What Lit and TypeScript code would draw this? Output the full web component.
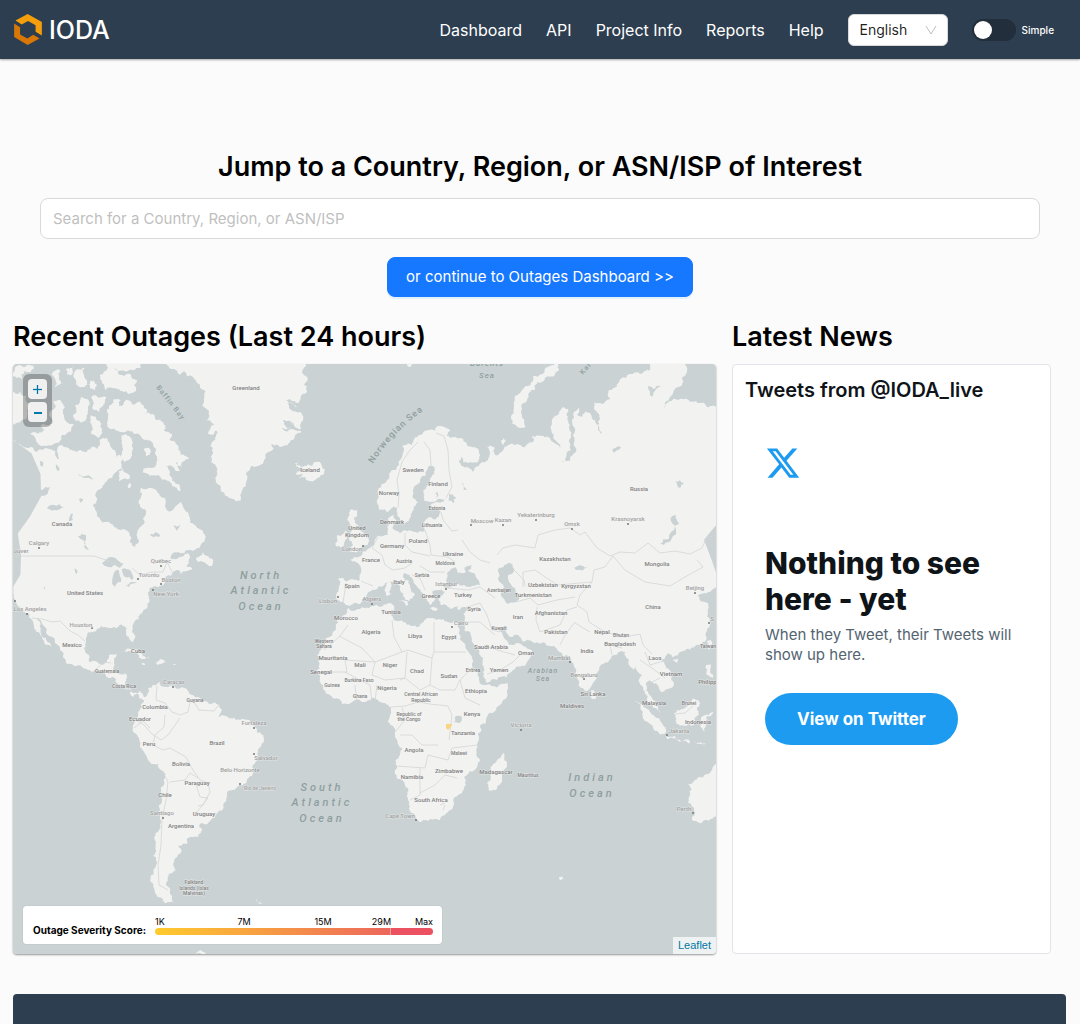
import { LitElement, html, css, svg } from "lit";
import { customElement, state } from "lit/decorators.js";

type Label = [x: number, y: number, text: string, size?: number];

/* Coastlines, as "x,y x,y ..." rings in map units. */
const LAND: string[] = [
  // Greenland
  "166,360 172,369 180,375 184,371 193,377 200,385 204,400 205,408 209,412 206,420 214,424 208,434 217,431 215,440 210,446 213,452 211,462 216,466 215,478 222,492 230,498 236,502 240,501 242,490 247,480 247,472 258,466 265,459 268,452 274,449 271,444 280,447 290,441 300,433 301,431 288,431 282,428 291,428 283,420 293,425 290,418 301,429 302,415 296,412 286,404 298,408 286,400 299,403 301,396 307,391 304,384 308,380 302,372 306,366 300,360",
  // Iceland
  "295,463 299,463 296,466 303,467 308,464 312,466 315,462 320,462 325,470 320,477 309,481 299,478 303,474 296,474 302,470",
  // Mainland of the Americas
  "13,440 20,444 30,447 36,452 50,449 57,452 62,445 70,450 80,450 86,452 93,446 97,449 100,440 107,438 110,444 113,450 116,458 120,455 121,462 118,470 112,478 105,483 96,493 93,505 98,517 110,523 120,530 129,532 130,542 135,547 139,541 138,530 144,524 146,514 140,507 139,500 142,495 141,488 150,488 157,492 165,498 166,508 172,511 176,506 180,501 185,510 189,514 190,523 197,528 203,532 205,540 200,547 190,550 178,552 170,558 180,557 188,553 189,559 186,566 192,569 181,574 178,570 172,575 167,576 160,586 153,587 148,595 147,608 140,614 134,622 132,630 135,638 134,643 130,640 127,628 120,625 112,628 105,627 97,629 88,632 86,640 85,652 90,662 100,664 107,662 109,655 117,654 114,662 113,669 125,673 127,678 125,688 133,693 140,691 144,697 148,688 153,685 160,682 161,686 165,687 175,687 187,689 193,695 205,701 215,702 222,710 219,717 228,717 240,720 255,727 263,735 264,742 258,752 253,765 252,776 246,783 238,786 227,793 224,803 217,813 210,821 200,824 202,830 198,837 188,838 187,844 178,846 181,853 174,860 176,870 168,880 166,885 170,892 175,904 165,903 155,893 150,880 155,868 153,856 156,842 160,825 162,800 164,785 163,771 150,762 147,757 140,745 134,733 133,728 135,720 140,710 144,700 138,694 133,697 123,686 115,678 105,674 95,671 88,670 72,664 63,657 60,648 52,637 43,625 37,618 40,627 46,638 52,648 46,645 40,634 32,620 28,613 20,608 15,600 10,592",
  "13,392 20,392 26,396 30,405 27,416 20,422 13,424",
  "13,376 15,368 22,366 34,365 31,372 25,371 22,379",
  "30,434 45,430 40,425 52,424 50,412 56,406 53,402 60,400 65,407 65,420 74,424 71,432 62,435 60,441 48,445 40,445 36,440",
  "73,415 75,405 80,402 82,397 89,401 87,415 81,423",
  "92,396 106,397 103,406 99,412 92,408",
  "91,415 97,420 102,430 99,438 91,434",
  "76,370 85,368 84,377 87,385 78,386",
  "52,375 60,370 59,378 64,384 55,387",
  "66,369 73,367 73,373 67,375",
  "90,381 94,380 97,386 95,390 90,388",
  "100,375 108,368 118,373 130,374 137,380 136,391 122,391 115,388 105,390 102,383",
  "104,360 142,360 140,368 132,370 118,371 109,370",
  // Baffin
  "110,405 114,399 121,400 119,406 126,400 133,405 140,402 147,410 145,415 153,414 160,420 165,425 164,431 172,434 170,440 176,444 181,455 189,459 182,467 176,462 180,472 172,466 165,466 170,472 180,485 180,492 172,486 163,480 158,475 150,476 142,473 143,469 152,468 157,458 155,448 145,440 135,434 128,430 118,431 109,428 108,418",
  "121,436 130,437 132,452 125,462 117,458 123,449",
  "119,471 123,468 130,476 128,480 119,481",
  "144,449 149,448 150,453 146,456",
  "127,486 131,484 130,488",
  "196,560 203,552 207,556 213,560 211,566 204,562",
  // Caribbean
  "123,652 130,649 138,650 150,658 144,659 137,653",
  "155,663 160,659 167,663 158,665",
  "172,664 176,664 175,665",
  "141,664 146,664 144,665",
  // Eurasia
  "338,579 342,578 355,580 360,580 361,572 358,563 350,560 356,557 361,556 363,552 368,549 374,545 378,536 388,535 387,527 388,518 395,514 397,522 393,529 400,533 408,531 416,532 425,531 424,522 430,517 435,520 441,512 436,507 428,508 434,503 446,499 438,499 430,502 424,500 423,490 430,480 435,470 432,466 428,467 426,475 418,484 413,495 418,502 412,512 409,521 404,524 400,518 397,508 393,507 387,512 380,510 377,500 378,490 387,480 395,470 400,460 404,450 402,446 408,443 412,445 418,436 423,434 430,430 435,431 440,426 446,428 450,431 446,436 455,437 465,442 475,447 480,455 478,462 468,463 463,462 461,457 459,461 468,467 473,472 479,466 481,463 488,460 487,447 494,447 495,455 503,450 515,445 525,447 533,442 532,436 540,436 550,438 560,448 554,435 558,415 561,409 568,409 570,425 569,440 571,450 565,459 561,462 570,461 576,448 573,435 574,418 579,408 577,415 587,424 582,414 590,413 598,425 600,434 602,432 600,418 594,408 594,402 610,399 609,390 620,379 630,374 640,374 650,370 652,360 683,360 687,372 682,385 670,397 664,408 678,400 690,402 700,403 707,407 720,407 720,585 708,592 698,595 700,600 705,602 708,610 710,622 706,632 700,645 690,650 678,655 672,657 668,653 662,660 665,665 672,675 674,685 668,689 663,692 658,685 650,680 646,683 646,690 652,698 658,707 660,713 653,708 647,700 643,690 642,675 636,666 633,671 629,660 625,652 618,652 612,656 605,663 595,674 592,685 587,691 581,688 575,675 571,660 570,656 563,657 556,648 545,643 535,643 525,641 520,637 510,637 502,627 499,630 506,640 509,645 518,643 523,646 532,652 527,662 513,670 497,680 487,683 484,668 480,655 473,643 464,630 465,622 467,607 460,607 450,609 441,605 439,596 445,592 438,590 432,591 435,600 430,605 425,598 418,588 412,578 405,573 403,577 410,588 415,595 409,601 405,598 400,590 393,582 385,583 378,587 372,590 366,597 360,604 350,606 344,603 338,600 339,588",
  // Africa
  "348,608 358,609 372,606 388,603 393,605 391,615 394,620 402,620 412,626 420,625 428,618 436,620 450,623 458,623 460,630 460,635 467,650 473,662 478,673 486,685 508,683 507,692 500,705 487,717 480,727 478,735 477,745 480,760 477,767 464,777 464,789 455,797 450,810 440,820 428,821 420,822 415,815 408,800 405,785 397,768 400,755 402,748 395,735 388,722 391,707 385,703 378,700 365,702 342,704 330,695 320,682 316,672 317,655 325,640 336,628 336,618",
  "503,753 507,762 502,778 496,790 490,791 487,783 490,770 497,760",
  "350,510 357,510 354,518 358,525 362,532 368,538 367,545 360,549 350,551 353,545 349,540 352,530 347,520",
  "337,535 345,530 347,538 344,545 336,546",
  "386,584 390,582 391,594 387,596",
  "398,600 408,601 406,606",
  "430,608 438,609 432,610",
  "457,608 463,606 459,610",
  // Arctic islands of Eurasia
  "556,360 559,370 545,378 535,390 527,400 522,415 525,428 517,427 511,418 514,405 522,390 533,376 548,367",
  "501,441 504,438 506,442 503,445",
  "407,364 412,364 411,367",
  // South Asia and Oceania
  "591,690 596,695 595,699 591,698",
  "634,701 642,704 650,712 658,718 664,726 664,734 658,732 650,724 643,712",
  "666,736 675,736 690,741 690,743 678,741 667,739",
  "674,713 678,710 685,708 693,698 700,703 697,708 699,715 694,725 685,726 676,723",
  "703,716 714,712 706,717 711,725 706,722 704,732",
  "706,665 711,664 710,672 714,678 707,675",
  "707,642 711,640 709,650",
  "673,660 678,658 677,663",
  "694,741 700,742 706,743 700,744",
  "720,762 710,773 695,780 688,784 690,795 688,803 695,812 692,820 700,823 705,820 720,818",
  "559,877 564,878 560,880",
  "256,899 262,903 260,904",
  "195,954 200,950 206,952 205,954",
];

const LAKES: string[] = [
  "443,586 447,578 450,571 455,567 458,573 466,572 464,568 472,565 468,571 478,580 480,585 470,587 458,584 448,588",
  "499,568 504,565 513,565 514,570 508,575 509,582 515,588 516,602 508,604 503,598 504,588 498,578",
  "102,563 112,557 124,564 120,568 108,567",
  "114,573 119,570 121,582 115,587",
  "122,569 131,571 132,580 125,577",
  "126,586 137,582 129,587",
  "455,717 461,716 459,723 454,723",
  "13,462 28,460 26,468 14,470",
  "34,494 42,490 50,487 46,495 38,497",
  "47,509 54,505 64,507 54,510",
  "78,536 86,535 89,550 84,547",
  "449,494 456,497 454,503 449,501",
  "462,482 467,490 463,491",
  "660,544 669,539 675,526 671,540 664,545",
  "648,386 655,389 663,386 654,392 652,397",
  "574,568 582,566 588,567 576,570",
  "675,481 684,483 680,488",
  "612,450 621,447 613,453",
  "40,461 43,462 42,467 40,465",
  "15,490 20,492 16,493",
  "55,463 58,466 59,471 56,467",
  "78,474 86,476 94,479 84,478",
  "71,514 74,512 73,520 69,521",
  "80,498 83,499 81,503",
  "54,450 57,449 59,459 56,457",
  "150,534 156,532 160,536 153,537",
  "173,526 180,524 176,531",
  "418,507 421,505 420,512",
  "435,493 438,492 437,498",
  "672,516 676,515 679,523 675,526",
  "42,586 45,587 44,590",
  "74,569 78,571 77,575",
];

const BORDERS: string[] = [
  "13,556 94,556 106,560 122,566 M13,556 V600",
  "32,618 42,619 52,622 60,621 70,631 78,635 85,641",
  "132,568 140,575 152,572 163,572 167,562 172,572",
  "94,671 104,662 111,663 M108,674 116,671 122,674 M127,687 132,692",
  "157,686 156,700 165,703 172,712 180,715 188,712 190,702 M193,700 199,710 214,711 220,703 M135,720 143,724 152,734 161,740 168,735 180,718",
  "134,728 143,721 150,728 M165,715 164,727 155,735 153,745 163,750 170,748 186,757 193,770 200,780 208,783 210,792 203,805 198,806",
  "163,772 168,782 166,800 162,820 161,845 158,865 159,885 168,890 M170,782 185,780 190,773 198,778 M196,784 200,797 208,798 197,812",
  "398,508 399,495 397,480 402,462 410,450 418,442 M424,442 430,450 431,465 M436,433 444,436 448,450 449,470 452,487 446,498",
  "441,512 443,520 452,531 458,530 M425,530 430,545 431,555 448,557 455,562 M405,533 405,545 412,552 430,556 M378,537 372,548 382,555 385,565",
  "346,583 343,603 M361,581 373,586 M385,565 393,570 405,568 412,563 M412,575 420,578 425,590 M420,566 430,572 445,572",
  "497,555 503,548 515,545 535,548 538,535 555,530 570,528 580,535 585,532 597,548 610,556 620,552 635,553 648,543 660,553 675,551 690,554 702,548 707,537 715,536",
  "514,570 524,580 525,586 M523,587 523,572 535,570 545,577 558,585 580,583 592,582 594,570 605,567 613,556",
  "613,556 625,570 645,582 670,586 685,577 703,567 697,560 M592,582 580,595 577,605 587,612 589,622 605,632 625,637 640,634 643,645 652,654",
  "516,602 530,598 538,605 557,600 575,597 M537,607 536,620 540,632 560,625 567,610 577,607 M575,622 565,635 560,645",
  "448,588 468,590 480,587 495,598 M467,607 480,603 487,615 492,630 500,632 M465,622 480,622 495,635",
  "487,674 500,670 513,662 520,655 M484,645 497,650 515,655",
  "348,625 340,636 324,650 M339,636 362,648 375,662 M392,620 394,637 402,652 375,662 345,660 347,672 318,672",
  "434,622 434,652 432,658 408,650 402,652 M434,652 466,652 M432,658 430,685 420,690 405,678 400,680",
  "375,662 372,675 385,680 405,678 407,652 M345,672 360,680 370,685 372,702 M377,685 375,701 M355,685 357,703",
  "430,685 440,690 455,690 460,680 472,668 M460,680 465,698 480,705 M391,707 405,706 418,702 430,704 448,706 452,715 449,740",
  "402,707 405,720 395,732 M400,735 412,735 422,745 438,745 M397,766 425,768 428,755 448,760 452,748 478,745",
  "420,768 420,795 410,800 M420,793 435,785 445,775 457,778 M445,805 443,810 M440,805 445,803",
  "640,660 652,668 665,678 M652,682 660,678 M645,652 650,665 660,662 671,660 M675,714 685,713 693,706",
  "612,655 610,645 622,648 M575,623 590,632 M462,540 470,552 480,560 490,563",
];

const COUNTRIES: Label[] = [
  [246, 390, "Greenland"], [310, 472, "Iceland"], [62, 526, "Canada"], [85, 595, "United States"],
  [72, 647, "Mexico"], [138, 653, "Cuba"], [107, 673, "Guatemala", 5], [124, 688, "Costa Rica", 5],
  [155, 709, "Colombia"], [140, 721, "Ecuador"], [149, 746, "Peru"], [217, 745, "Brazil"],
  [195, 702, "Guyana", 5], [181, 766, "Bolivia"], [197, 785, "Paraguay"], [165, 797, "Chile"],
  [204, 816, "Uruguay"], [181, 828, "Argentina"], [194, 884, "Falkland", 5], [194, 890, "Islands (Islas", 5],
  [194, 895, "Malvinas)", 5], [413, 472, "Sweden"], [438, 486, "Finland"], [389, 495, "Norway"],
  [437, 510, "Estonia", 5], [392, 524, "Denmark"], [432, 527, "Lithuania", 5], [357, 530, "United"],
  [357, 537, "Kingdom"], [392, 548, "Germany"], [418, 543, "Poland"], [453, 556, "Ukraine"],
  [371, 562, "France"], [404, 563, "Austria", 5], [445, 565, "Moldova", 5], [422, 577, "Serbia", 5],
  [352, 588, "Spain"], [399, 584, "Italy"], [431, 598, "Greece"], [463, 597, "Turkey"],
  [391, 614, "Tunisia"], [346, 620, "Morocco"], [371, 634, "Algeria"], [415, 638, "Libya"],
  [449, 639, "Egypt"], [324, 643, "Western", 5], [324, 648, "Sahara", 5], [333, 660, "Mauritania"],
  [360, 667, "Mali"], [390, 667, "Niger"], [417, 673, "Chad"], [449, 678, "Sudan"],
  [321, 674, "Senegal"], [359, 682, "Burkina Faso", 5], [332, 687, "Guinea", 5], [387, 690, "Nigeria"],
  [360, 698, "Ghana", 5], [421, 696, "Central African", 5], [421, 702, "Republic", 5],
  [476, 693, "Ethiopia"], [473, 672, "Eritrea", 5], [409, 716, "Republic of", 5], [409, 721, "the Congo", 5],
  [472, 716, "Kenya"], [463, 735, "Tanzania"], [414, 752, "Angola"], [459, 755, "Malawi", 5],
  [412, 779, "Namibia"], [449, 773, "Zimbabwe"], [431, 802, "South Africa"], [496, 774, "Madagascar"],
  [528, 777, "Mauritius", 5], [639, 491, "Russia"], [555, 561, "Kazakhstan"], [657, 566, "Mongolia"],
  [543, 587, "Uzbekistan"], [576, 588, "Kyrgyzstan"], [533, 597, "Turkmenistan"], [499, 592, "Azerbaijan", 5],
  [653, 609, "China"], [551, 615, "Afghanistan"], [518, 619, "Iran"], [474, 611, "Syria"],
  [499, 630, "Kuwait", 5], [556, 634, "Pakistan"], [602, 634, "Nepal"], [621, 637, "Bhutan", 5],
  [491, 649, "Saudi Arabia"], [526, 655, "Oman"], [499, 672, "Yemen"], [587, 653, "India"],
  [620, 646, "Bangladesh"], [655, 660, "Laos"], [671, 676, "Vietnam"], [593, 696, "Sri Lanka"],
  [572, 708, "Maldives"], [654, 705, "Malaysia"], [689, 705, "Brunei", 5], [698, 724, "Indonesia"],
  [713, 684, "Philippines"], [708, 648, "Taiwan", 5],
];

const CITIES: Label[] = [
  [39, 545, "Calgary"], [21, 553, "ouver"], [161, 563, "Québec"], [149, 577, "Toronto"],
  [171, 582, "Boston"], [166, 596, "New York"], [30, 611, "Los Angeles"], [81, 627, "Houston"],
  [174, 684, "Caracas"], [254, 725, "Fortaleza"], [266, 760, "Salvador"], [240, 772, "Belo Horizonte"],
  [260, 790, "Rio de Janeiro", 5], [162, 815, "Santiago"], [400, 818, "Cape Town"], [352, 551, "London"],
  [482, 523, "Moscow"], [503, 522, "Kazan"], [536, 517, "Yekaterinburg"], [572, 526, "Omsk"],
  [628, 521, "Krasnoyarsk"], [328, 603, "Lisbon"], [372, 601, "Algiers"], [446, 586, "Istanbul"],
  [461, 625, "Cairo"], [559, 660, "Mumbai"], [584, 677, "Bengaluru"], [521, 727, "Victoria"],
  [679, 733, "Jakarta"], [695, 590, "Beijing"], [684, 811, "Perth"], [712, 621, "S"],
];

const DOTS: [number, number][] = [
  [39, 548], [161, 566], [138, 579], [161, 584], [153, 590], [15, 601], [27, 614], [92, 628], [173, 687],
  [254, 728], [254, 754], [240, 784], [163, 818], [416, 820], [363, 546], [471, 525], [503, 525], [536, 520],
  [572, 529], [628, 524], [338, 597], [372, 604], [446, 589], [452, 627], [570, 662], [584, 679],
  [521, 730], [667, 735], [695, 593], [693, 813], [709, 623],
];

const OCEANS: Label[] = [
  [261, 579, "North"], [261, 594, "Atlantic"], [261, 610, "Ocean"],
  [322, 791, "South"], [322, 806, "Atlantic"], [322, 822, "Ocean"],
  [592, 781, "Indian"], [592, 797, "Ocean"],
];

const SEAS: Label[] = [
  [487, 366, "Barents", 8], [487, 378, "Sea", 8], [543, 673, "Arabian", 7], [543, 681, "Sea", 7],
];

/* Splits every edge of a ring and nudges the new points, which gives a coast its ragged line. */
function coast(ring: string, depth = 3): string {
  let pts = ring.split(" ").map((p) => p.split(",").map(Number));
  for (let d = 0; d < depth; d++) {
    const next: number[][] = [];
    pts.forEach(([x, y], i) => {
      const [u, v] = pts[(i + 1) % pts.length];
      const noise = Math.sin(x * 12.9898 + y * 78.233 + d) * 43758.5453;
      const k = (noise - Math.floor(noise) - 0.5) * 0.5;
      next.push([x, y], [(x + u) / 2 - (v - y) * k, (y + v) / 2 + (u - x) * k]);
    });
    pts = next;
  }
  return pts.map(([x, y]) => `${x.toFixed(1)},${y.toFixed(1)}`).join(" ");
}

@customElement("world-map")
class WorldMap extends LitElement {
  static styles = css`
    :host { display: block; height: 100%; }
    svg { display: block; width: 100%; height: 100%; background: #cad2d3; }
    .land { fill: #f2f2f1; }
    .lake { fill: #cad2d3; }
    .border { fill: none; stroke: #d3d5d5; stroke-width: 0.8; stroke-linejoin: round; }
    text { font-family: Roboto, "Liberation Sans", sans-serif; text-anchor: middle; }
    .country, .city { paint-order: stroke; stroke: #f4f4f3; stroke-width: 1; stroke-opacity: 0.6; font-weight: 500; }
    .country { fill: #808080; }
    .city { fill: #a0a0a0; }
    .dot { fill: #777; }
    .ocean { fill: #8f9f9f; font-size: 11px; font-style: italic; font-weight: 500; letter-spacing: 3px; }
    .sea { fill: #8f9f9f; letter-spacing: 1px; font-weight: 500; }
    .alert { fill: #f8d57e; }
  `;

  private labels(list: Label[], cls: string) {
    return list.map(([x, y, text, size = 6]) => svg`<text class=${cls} x=${x} y=${y} font-size=${size}>${text}</text>`);
  }

  render() {
    return html`
      <svg viewBox="13 364 703 590" preserveAspectRatio="xMidYMid slice" role="img" aria-label="World map of outages">
        ${LAND.map((r) => svg`<polygon class="land" points=${coast(r)} />`)}
        ${LAKES.map((r) => svg`<polygon class="lake" points=${coast(r, 2)} />`)}
        ${BORDERS.map((b) => svg`<path class="border" d=${"M" + b} />`)}
        <polygon class="alert" points="446,724 452,724 451,727 448,730 446,728" />
        ${DOTS.map(([x, y]) => svg`<circle class="dot" cx=${x} cy=${y} r="1" />`)}
        ${this.labels(CITIES, "city")}
        ${this.labels(COUNTRIES, "country")}
        ${OCEANS.map(([x, y, t]) => svg`<text class="ocean" x=${x} y=${y}>${t}</text>`)}
        ${SEAS.map(([x, y, t, s]) => svg`<text class="sea" x=${x} y=${y} font-size=${s ?? 8} font-style="italic">${t}</text>`)}
        <path id="norwegian" d="M373,464 Q390,435 424,410" fill="none" />
        <text class="sea" font-size="9"><textPath href="#norwegian" startOffset="50%">Norwegian Sea</textPath></text>
        <text class="sea" font-size="7" transform="translate(169 404) rotate(52)">Baffin Bay</text>
        <text class="sea" font-size="7" transform="translate(589 368) rotate(-50)">Kara</text>
      </svg>
    `;
  }
}

@customElement("app-root")
class AppRoot extends LitElement {
  @state() private simple = false;

  static styles = css`
    :host {
      display: flex;
      flex-direction: column;
      min-height: 100vh;
      background: #fbfbfb;
      color: #000;
      font-family: Inter, "Liberation Sans", sans-serif;
    }
    * { box-sizing: border-box; }
    h1, h2, h3, p { margin: 0; }
    a { color: inherit; text-decoration: none; }

    .header {
      display: flex;
      align-items: center;
      justify-content: space-between;
      height: 59px;
      padding: 0 26px 0 14px;
      background: #2d3e50;
      color: #fff;
      box-shadow: 0 1px 2px rgba(0, 0, 0, 0.35);
    }
    .brand { display: flex; align-items: center; gap: 7px; font-size: 25px; font-weight: 500; line-height: 32px; }
    .brand svg { width: 28px; height: 31px; }
    .nav { display: flex; align-items: center; gap: 24px; font-size: 16px; line-height: 24px; }
    .lang { display: grid; width: 100px; align-items: center; }
    .lang > * { grid-area: 1 / 1; }
    .lang select {
      appearance: none;
      height: 32px;
      padding: 0 11px;
      border: 1px solid #d9d9d9;
      border-radius: 6px;
      background: #fff;
      color: rgba(0, 0, 0, 0.88);
      font: 14px/30px Inter, sans-serif;
    }
    .lang svg { width: 12px; height: 12px; margin-right: 11px; justify-self: end; pointer-events: none; }
    .mode { display: flex; align-items: center; gap: 6px; font-size: 10px; font-weight: 500; }
    .mode input {
      appearance: none;
      width: 44px;
      height: 22px;
      margin: 0;
      padding: 2px;
      border-radius: 11px;
      background: #222e3b;
    }
    .mode input::before { content: ""; display: block; width: 18px; height: 18px; border-radius: 50%; background: #fff; }
    .mode input:checked::before { margin-left: 22px; }

    .search { display: flex; flex-direction: column; align-items: center; padding: 88px 40px 0; }
    .title { font-size: 27px; font-weight: 600; line-height: 40px; text-align: center; }
    .search input {
      width: 100%;
      height: 41px;
      margin-top: 11px;
      padding: 0 12px;
      border: 1px solid #d9d9d9;
      border-radius: 8px;
      background: #fff;
      font: 15px/24px Inter, sans-serif;
    }
    .search input::placeholder { color: #bfbfbf; opacity: 1; }
    .primary {
      height: 40px;
      margin-top: 18px;
      padding: 0 18px;
      border: 1px solid #1677ff;
      border-radius: 8px;
      background: #1677ff;
      box-shadow: 0 2px 0 rgba(5, 145, 255, 0.1);
      color: #fff;
      font: 15px/24px Inter, sans-serif;
    }

    .columns { display: grid; grid-template-columns: 703fr 319fr; gap: 16px; padding: 20px 29px 0 13px; }
    .heading { margin-bottom: 7px; font-size: 27px; font-weight: 600; line-height: 40px; }
    .map {
      position: relative;
      height: 590px;
      border-radius: 4px;
      overflow: hidden;
    }
    .frame { border-radius: 4px; box-shadow: 0 1px 2px rgba(0, 0, 0, 0.4); }
    .zoom {
      position: absolute;
      top: 10px;
      left: 10px;
      display: grid;
      gap: 3px;
      padding: 5px;
      border-radius: 6px;
      background: rgba(0, 0, 0, 0.25);
    }
    .zoom button {
      display: grid;
      place-items: center;
      width: 19px;
      height: 20px;
      padding: 0;
      border: 0;
      border-radius: 4px;
      background: rgba(255, 255, 255, 0.85);
    }
    .zoom svg { width: 9px; height: 9px; }
    .legend {
      position: absolute;
      left: 10px;
      bottom: 10px;
      display: flex;
      align-items: flex-end;
      gap: 9px;
      padding: 11px 9px 8px 10px;
      border-radius: 3px;
      background: #fff;
      box-shadow: 0 0 1px rgba(0, 0, 0, 0.3);
      font-size: 10px;
      font-weight: 700;
      line-height: 12px;
    }
    .scale { width: 278px; font-size: 9px; font-weight: 400; line-height: 10px; }
    .ticks { display: grid; grid-template-columns: 46px 86px 72px 32px 42px; text-align: center; }
    .ticks :first-child { text-align: left; }
    .ticks :nth-child(n + 4) { text-align: right; }
    .bar { display: flex; height: 7px; margin: 1px 0; border-radius: 4px; overflow: hidden; }
    .ramp { flex: 236; background: linear-gradient(90deg, #ffcb2e, #ed665c); }
    .max { flex: 42; border-left: 1px solid #f3a09b; background: #eb5160; }
    .leaflet {
      position: absolute;
      right: 0;
      bottom: 0;
      padding: 0 5px;
      background: rgba(255, 255, 255, 0.7);
      color: #0078a8;
      font: 11px/17px "Liberation Sans", Arial, sans-serif;
    }

    .feed {
      height: 590px;
      padding: 12px;
      border: 1px solid #e3e3ea;
      border-radius: 4px;
      background: #fff;
      color: #0f1419;
    }
    .from { font-size: 20px; font-weight: 600; line-height: 26px; }
    .empty { display: flex; flex-direction: column; align-items: flex-start; padding: 42px 20px 0; }
    .empty svg { width: 36px; height: 36px; }
    .nothing { margin-top: 64px; font-size: 30px; font-weight: 800; line-height: 36px; }
    .note { margin-top: 8px; color: #536471; font-size: 15px; line-height: 20px; }
    .view {
      margin-top: 28px;
      padding: 0 32px;
      border-radius: 26px;
      background: #1d9bf0;
      color: #fff;
      font-size: 17px;
      font-weight: 700;
      line-height: 52px;
    }
    .footer { flex: 1; min-height: 30px; margin: 40px 14px 0 13px; border-radius: 4px 4px 0 0; background: #2d3e50; }
  `;

  render() {
    return html`
      <header class="header">
        <a class="brand" href="#">
          <svg viewBox="42 41 84 94" aria-hidden="true">
            <path fill="#f59e0b" d="M46 61 83 41 126 65V106L107 95V75L84 62 65 73Z" />
            <path fill="#d97706" d="M42 70 60 81V103L82 115 100 104 119 115 83 135 42 111Z" />
          </svg>
          IODA
        </a>
        <nav class="nav">
          <a href="#dashboard">Dashboard</a>
          <a href="#api">API</a>
          <a href="#project">Project Info</a>
          <a href="#reports">Reports</a>
          <a href="#help">Help</a>
          <div class="lang">
            <select aria-label="Language"><option>English</option></select>
            <svg viewBox="0 0 12 12" fill="none" stroke="#bfbfbf" aria-hidden="true"><path d="M1 2 6 10 11 2" /></svg>
          </div>
          <label class="mode">
            <input type="checkbox" role="switch" .checked=${this.simple}
              @change=${(e: Event) => (this.simple = (e.target as HTMLInputElement).checked)} />
            Simple
          </label>
        </nav>
      </header>

      <section class="search">
        <h1 class="title"><label for="entity">Jump to a Country, Region, or ASN/ISP of Interest</label></h1>
        <input id="entity" type="text" placeholder="Search for a Country, Region, or ASN/ISP" />
        <button class="primary" type="button">or continue to Outages Dashboard &gt;&gt;</button>
      </section>

      <main class="columns">
        <section>
          <h2 class="heading">Recent Outages (Last 24 hours)</h2>
          <div class="frame">
            <div class="map">
              <world-map></world-map>
              <div class="zoom">
                <button type="button" aria-label="Zoom in">
                  <svg viewBox="0 0 9 9" fill="#0078a8" aria-hidden="true"><path d="M0 4H4V0H5V4H9V5H5V9H4V5H0Z" stroke="#0078a8" stroke-width="0.3" /></svg>
                </button>
                <button type="button" aria-label="Zoom out">
                  <svg viewBox="0 0 9 9" fill="#0078a8" aria-hidden="true"><path d="M1 4H9V6H1Z" /></svg>
                </button>
              </div>
              <div class="legend">
                <span>Outage Severity Score:</span>
                <div class="scale">
                  <div class="ticks"><span>1K</span><span>7M</span><span>15M</span><span>29M</span><span>Max</span></div>
                  <div class="bar"><div class="ramp"></div><div class="max"></div></div>
                </div>
              </div>
              <a class="leaflet" href="#leaflet">Leaflet</a>
            </div>
          </div>
        </section>
        <section>
          <h2 class="heading">Latest News</h2>
          <div class="feed">
            <h3 class="from">Tweets from @IODA_live</h3>
            <div class="empty">
              <svg viewBox="0 0 24 24" fill="#1d9bf0" aria-hidden="true">
                <path d="M18.244 2.25h3.308l-7.227 8.26 8.502 11.24H16.17l-5.214-6.817L4.99 21.75H1.68l7.73-8.835L1.254 2.25H8.08l4.713 6.231zm-1.161 17.52h1.833L7.084 4.126H5.117z" />
              </svg>
              <h3 class="nothing">Nothing to see here - yet</h3>
              <p class="note">When they Tweet, their Tweets will show up here.</p>
              <a class="view" href="#twitter">View on Twitter</a>
            </div>
          </div>
        </section>
      </main>
      <footer class="footer"></footer>
    `;
  }
}
